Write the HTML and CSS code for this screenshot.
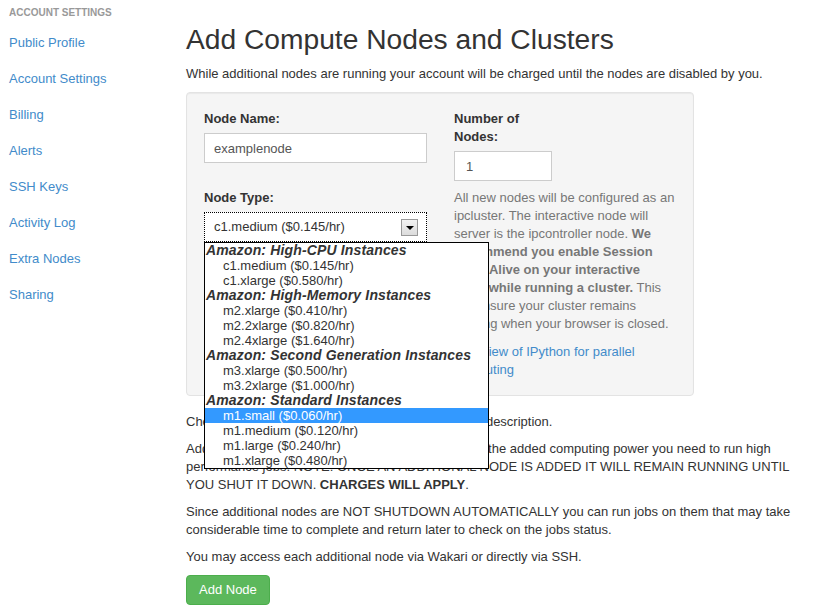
FILE: index.html
```html
<!DOCTYPE html>
<html>
<head>
<meta charset="utf-8">
<title>Add Compute Nodes and Clusters</title>
<link rel="stylesheet" href="styles.css">
</head>
<body>
<div class="page">
  <aside class="sidebar">
    <div class="nav-header">Account Settings</div>
    <ul class="nav-list">
      <li><a href="#">Public Profile</a></li>
      <li><a href="#">Account Settings</a></li>
      <li><a href="#">Billing</a></li>
      <li><a href="#">Alerts</a></li>
      <li><a href="#">SSH Keys</a></li>
      <li><a href="#">Activity Log</a></li>
      <li><a href="#">Extra Nodes</a></li>
      <li><a href="#">Sharing</a></li>
    </ul>
  </aside>
  <main class="content">
    <h1 class="title">Add Compute Nodes and Clusters</h1>
    <p class="intro">While additional nodes are running your account will be charged until the nodes are disabled by you.</p>
    <div class="well">
      <div class="form-grid">
        <div class="col">
          <label class="label">Node Name:</label>
          <input class="text-input" type="text" value="examplenode">
          <label class="label">Node Type:</label>
          <div class="select-wrap">
            <div class="select-box">
              <span class="select-value">c1.medium ($0.145/hr)</span>
              <span class="select-arrow"><span class="tri"></span></span>
            </div>
            <ul class="select-list">
              <li class="opt-group">Amazon: High-CPU Instances</li>
              <li class="opt">c1.medium ($0.145/hr)</li>
              <li class="opt">c1.xlarge ($0.580/hr)</li>
              <li class="opt-group">Amazon: High-Memory Instances</li>
              <li class="opt">m2.xlarge ($0.410/hr)</li>
              <li class="opt">m2.2xlarge ($0.820/hr)</li>
              <li class="opt">m2.4xlarge ($1.640/hr)</li>
              <li class="opt-group">Amazon: Second Generation Instances</li>
              <li class="opt">m3.xlarge ($0.500/hr)</li>
              <li class="opt">m3.2xlarge ($1.000/hr)</li>
              <li class="opt-group">Amazon: Standard Instances</li>
              <li class="opt selected">m1.small ($0.060/hr)</li>
              <li class="opt">m1.medium ($0.120/hr)</li>
              <li class="opt">m1.large ($0.240/hr)</li>
              <li class="opt">m1.xlarge ($0.480/hr)</li>
            </ul>
          </div>
        </div>
        <div class="col">
          <label class="label">Number of<br>Nodes:</label>
          <input class="text-input num-input" type="text" value="1">
          <p class="help">All new nodes will be configured as an ipcluster. The interactive node will server is the ipcontroller node. <strong>We recommend you enable Session Keep Alive on your interactive<br>node while running a cluster.</strong> This will ensure your cluster remains running when your browser is closed.</p>
          <p class="help help-link"><a href="#">Overview of IPython for parallel computing</a></p>
        </div>
      </div>
    </div>
    <p class="para">Choose a node type from the list above to see a full description.</p>
    <p class="para">Additional compute nodes can be added to give you the added computing power you need to run high performance jobs. NOTE: ONCE AN ADDITIONAL NODE IS ADDED IT WILL REMAIN RUNNING UNTIL YOU SHUT IT DOWN. <strong>CHARGES WILL APPLY</strong>.</p>
    <p class="para">Since additional nodes are NOT SHUTDOWN AUTOMATICALLY you can run jobs on them that may take considerable time to complete and return later to check on the jobs status.</p>
    <p class="para last">You may access each additional node via Wakari or directly via SSH.</p>
    <button class="btn-success" type="button">Add Node</button>
  </main>
</div>
</body>
</html>
```
FILE: styles.css
```css
body {
  margin: 0;
  font-family: "Liberation Sans", Arial, sans-serif;
  font-size: 13px;
  line-height: 18px;
  color: #333;
  background: #fff;
}

.page {
  display: grid;
  grid-template-columns: 177px 614px;
  padding-left: 9px;
}

.sidebar {
  padding-top: 4px;
}

.nav-header {
  font-size: 10px;
  font-weight: bold;
  color: #999;
  line-height: 18px;
  text-transform: uppercase;
}

.nav-list {
  list-style: none;
  margin: 3px 0 0;
  padding: 0;
}

.nav-list a {
  display: block;
  padding: 9px 0;
  color: #428bca;
  text-decoration: none;
  line-height: 18px;
}

.title {
  font-size: 28.2px;
  font-weight: normal;
  line-height: 33px;
  margin: 23px 0 9px;
  color: #333;
}

.intro {
  margin: 0 0 9px;
}

.well {
  width: 508px;
  box-sizing: border-box;
  padding: 17px 13px 16px 17px;
  background: #f5f5f5;
  border: 1px solid #e3e3e3;
  border-radius: 4px;
  box-shadow: inset 0 1px 1px rgba(0, 0, 0, 0.05);
  margin-bottom: 17px;
}

.form-grid {
  display: grid;
  grid-template-columns: 223px 226px;
  column-gap: 27px;
}

.label {
  display: block;
  font-weight: bold;
  margin-bottom: 5px;
}

.text-input {
  display: block;
  box-sizing: border-box;
  width: 223px;
  height: 30px;
  padding: 0 9px;
  margin: 0 0 26px;
  border: 1px solid #ccc;
  border-radius: 0;
  background: #fff;
  font-family: "Liberation Sans", Arial, sans-serif;
  font-size: 13px;
  color: #555;
  outline: none;
}

.num-input {
  width: 98px;
  padding: 0 11px;
  margin-bottom: 8px;
}

.select-wrap {
  position: relative;
}

.select-box {
  box-sizing: border-box;
  height: 30px;
  display: flex;
  align-items: center;
  justify-content: space-between;
  padding: 0 8px 0 9px;
  border: 1px dotted #000;
  background: #fff;
}

.select-value {
  color: #333;
}

.select-arrow {
  box-sizing: border-box;
  width: 17px;
  height: 17px;
  border: 1px solid #999;
  background: linear-gradient(#f2f2f2, #dcdcdc);
  display: flex;
  align-items: center;
  justify-content: center;
}

.tri {
  width: 0;
  height: 0;
  border-left: 4px solid transparent;
  border-right: 4px solid transparent;
  border-top: 4px solid #000;
  margin-top: 1px;
}

.select-list {
  position: absolute;
  top: 100%;
  left: 0;
  width: 285px;
  box-sizing: border-box;
  margin: 0;
  padding: 0;
  list-style: none;
  background: #fff;
  border: 1px solid #000;
  z-index: 10;
}

.opt-group,
.opt {
  line-height: 15px;
  height: 15px;
  white-space: nowrap;
}

.opt-group {
  font-size: 14px;
  font-weight: bold;
  font-style: italic;
  letter-spacing: 0.15px;
  color: #333;
  padding-left: 1px;
}

.opt {
  padding-left: 18px;
  color: #333;
}

.opt.selected {
  background: #3399ff;
  color: #fff;
}

.help {
  margin: 0 0 10px;
  color: #777;
}

.help-link {
  margin: 0;
}

.help a,
.content a {
  color: #428bca;
  text-decoration: none;
}

.para {
  margin: 0 0 9px;
}

.para.last {
  margin-bottom: 9px;
}

.btn-success {
  display: inline-block;
  padding: 5px 12px;
  font-family: "Liberation Sans", Arial, sans-serif;
  font-size: 13px;
  line-height: 18px;
  color: #fff;
  background: #5cb85c;
  border: 1px solid #4cae4c;
  border-radius: 4px;
  cursor: pointer;
}
```
